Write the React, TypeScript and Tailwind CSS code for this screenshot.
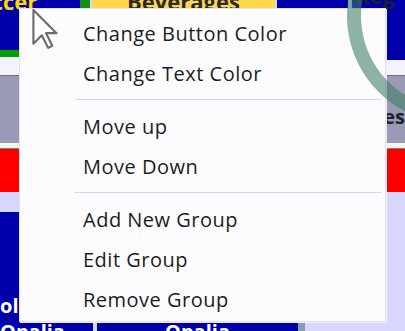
import React from 'react'

type Entry = { label: string } | { sep: true }

const entries: Entry[] = [
  { label: 'Change Button Color' },
  { label: 'Change Text Color' },
  { sep: true },
  { label: 'Move up' },
  { label: 'Move Down' },
  { sep: true },
  { label: 'Add New Group' },
  { label: 'Edit Group' },
  { label: 'Remove Group' },
]

const font = { fontFamily: '"Open Sans", "Noto Sans", sans-serif' }

const Cursor = () => (
  <svg className="absolute left-[32px] top-[9px]" width="28" height="42" viewBox="-1 -1 26 40">
    <path
      d="M0 0 L0 32 L8 24 L14 36 L18 34 L12 22 L22 22 Z"
      fill="#ffffff"
      stroke="#6b6b6b"
      strokeWidth="2"
      strokeLinejoin="round"
    />
  </svg>
)

const Spinner = () => (
  <svg className="pointer-events-none absolute left-0 top-0" width="405" height="331">
    <circle cx="454" cy="16" r="100" fill="none" stroke="rgba(60,125,98,0.58)" strokeWidth="14" />
  </svg>
)

const Menu = () => (
  <div
    className="absolute left-[19px] top-[8px] flex h-[314px] w-[367px] flex-col border border-[#e2e2f4] bg-[#fcfcff] pt-[4px] shadow-[1px_1px_0_#eeeefc]"
    style={font}
  >
    {entries.map((e, i) =>
      'sep' in e ? (
        <div key={i} className="py-[6px] pl-[55px] pr-[4px]">
          <div className="h-px bg-[#d4d4f6]" />
        </div>
      ) : (
        <div key={i} className="flex h-[40px] items-center pl-[63px] pt-[1px] text-[20px] tracking-[0.5px] text-[#1c1c1c]">
          {e.label}
        </div>
      )
    )}
  </div>
)

export default function App() {
  return (
    <div className="relative h-[331px] w-[405px] overflow-hidden bg-[#d7d7fd]" style={font}>
      <div className="flex flex-col">
        <div className="flex h-[60px]">
          <div className="flex w-[80px] flex-col">
            <div className="h-[50px] overflow-hidden bg-[#0000aa]">
              <div className="-mt-[15px] -ml-[34px] text-[22px] font-bold text-[#ffd800]">Soccer</div>
            </div>
            <div className="h-[7px] bg-[#00a000]" />
            <div className="h-[3px] bg-[#f6f6ff]" />
          </div>
          <div className="h-[50px] w-[10px] bg-[#1a8a1a]" />
          <div className="ml-[2px] h-[50px] w-[183px] overflow-hidden bg-[#ffd84c]">
            <div className="-mt-[15px] text-center text-[22px] font-bold text-[#2a2a2a]">Beverages</div>
          </div>
          <div className="ml-[2px] h-[50px] w-[71px] bg-[#0000aa]" />
          <div className="ml-[4px] flex flex-1 flex-col bg-[#0000aa]">
            <div className="-mt-[15px] h-[20px] pl-[3px] text-[22px] font-bold leading-[20px] text-[#1e1e2e]">Reg</div>
          </div>
        </div>
        <div className="h-[15px] bg-[#f4f4ff]" />
        <div className="flex h-[68px] items-end justify-end border-t border-[#6e6e86] bg-[#9a9ab6]">
          <span className="mb-[16px] text-[20px] font-bold leading-none text-[#1e1e2e]">es</span>
        </div>
        <div className="h-[5px] bg-[#f4f6f2]" />
        <div className="h-[44px] border-t border-[#7a8a6a] bg-[#ff0000]" />
        <div className="h-[20px]" />
        <div className="flex h-[110px]">
          <div className="flex w-[200px] items-end bg-[#0000aa] pb-[6px]">
            <span className="text-[20px] font-bold leading-none text-white">ol</span>
          </div>
        </div>
        <div className="flex h-[9px] overflow-hidden">
          <div className="w-[93px] bg-[#0000aa]">
            <div className="text-[20px] font-bold leading-[20px] text-white">Opalia</div>
          </div>
          <div className="ml-[4px] w-[201px] bg-[#0000aa] text-center">
            <div className="text-[20px] font-bold leading-[20px] text-white">Opalia</div>
          </div>
          <div className="w-[7px] bg-[#8a9ab8]" />
        </div>
      </div>
      <Menu />
      <Cursor />
      <Spinner />
    </div>
  )
}
